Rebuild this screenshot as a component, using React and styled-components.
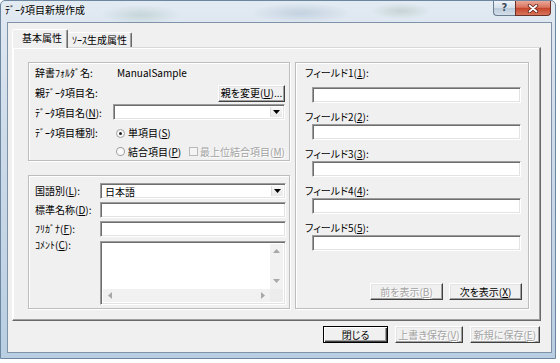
import React from "react";
import styled, { createGlobalStyle, css } from "styled-components";

const Global = createGlobalStyle`
  html, body { margin: 0; padding: 0; background: #fff; }
  body {
    width: 560px; height: 363px; overflow: hidden;
    font-family: "Noto Sans CJK JP", "Noto Sans", sans-serif;
    font-size: 10px; color: #000;
    font-feature-settings: "palt";
  }
  * { box-sizing: border-box; }
`;

const Win = styled.div`
  width: 556px;
  height: 359px;
  border: 1px solid #6d87a1;
  border-radius: 5px 5px 0 0;
  background: linear-gradient(180deg, #e2eaf2 0%, #cfdcea 35%, #b9cee2 100%);
  display: flex;
  flex-direction: column;
  padding: 0 3px 5px 6px;
`;

const TitleBar = styled.div`
  height: 21px;
  margin: 0 -3px 0 -6px;
  padding: 0 4px 0 4px;
  display: flex;
  align-items: flex-start;
  justify-content: space-between;
  background:
    radial-gradient(ellipse 40px 10px at 140px 14px, rgba(120,160,150,0.25), transparent),
    radial-gradient(ellipse 50px 10px at 300px 12px, rgba(110,140,170,0.25), transparent),
    radial-gradient(ellipse 30px 8px at 400px 10px, rgba(120,150,130,0.25), transparent);
`;

const Title = styled.div`
  margin-top: 3px;
  line-height: 12px;
  font-size: 10px;
  text-shadow: 0 0 5px rgba(255,255,255,0.9);
`;

const CaptionBtns = styled.div`
  display: flex;
  height: 15px;
`;

const HelpBtn = styled.div`
  width: 22px;
  height: 15px;
  border: 1px solid #6a7c8f;
  border-top: none;
  border-right: none;
  border-radius: 0 0 0 4px;
  background: linear-gradient(180deg, #eef3f8 0%, #d6e0ea 48%, #bccbda 52%, #d3dee9 100%);
  color: #3c4b5a;
  font-family: "DejaVu Sans", sans-serif;
  font-size: 10px;
  font-weight: bold;
  line-height: 14px;
  text-align: center;
`;

const CloseBtn = styled.div`
  width: 36px;
  height: 15px;
  border: 1px solid #6b3129;
  border-top: none;
  border-radius: 0 0 4px 0;
  background: linear-gradient(180deg, #eaa797 0%, #d9755f 45%, #c5452c 52%, #d8765c 100%);
  display: flex;
  align-items: center;
  justify-content: center;
`;

const Client = styled.div`
  flex: 1;
  border: 1px solid #7f93a8;
  background: #f0f0f0;
  padding: 6px 10px 9px 4px;
  display: flex;
  flex-direction: column;
`;

const TabStrip = styled.div`
  height: 18px;
  display: flex;
  align-items: flex-end;
  position: relative;
  z-index: 1;
`;

const Tab = styled.div`
  height: ${p => (p.$active ? 19 : 15)}px;
  margin-bottom: ${p => (p.$active ? -1 : 0)}px;
  padding: ${p => (p.$active ? "0 5px 0 9px" : "0 4px 0 4px")};
  display: flex;
  align-items: center;
  background: #f0f0f0;
  border: 1px solid;
  border-bottom: none;
  border-color: #fff #696969 transparent #fff;
  border-radius: 2px 2px 0 0;
  box-shadow: inset -1px 0 0 #a0a0a0;
  line-height: 12px;
  ${p => p.$active && css`padding-bottom: 2px;`}
  ${p => !p.$active && css`border-left: none;`}
`;

const Panel = styled.div`
  height: 274px;
  border: 1px solid;
  border-color: #d8d8d8 #696969 #696969 #fff;
  box-shadow: inset -1px -1px 0 #a0a0a0, inset 1px 1px 0 #fff;
  padding: 14px 11px 11px 15px;
  display: flex;
  gap: 5px;
`;

const LeftCol = styled.div`
  width: 262px;
  display: flex;
  flex-direction: column;
  gap: 14px;
`;

const Group = styled.div`
  border: 1px solid #bdbdbd;
  box-shadow: inset 1px 1px 0 #fff, 1px 1px 0 #fff;
`;

const TopGroup = styled(Group)`
  height: 99px;
  display: grid;
  grid-template-columns: 78px 172px;
  grid-template-rows: 20px 20px 20px 20px 17px;
  padding: 0 4px 0 6px;
`;

const BottomGroup = styled(Group)`
  height: 134px;
  display: grid;
  grid-template-columns: 65px 186px;
  grid-template-rows: 16px 16px 16px 1fr;
  row-gap: 3px;
  padding: 7px 3px 3px 6px;
`;

const RightGroup = styled(Group)`
  width: 234px;
  display: flex;
  flex-direction: column;
  padding: 4px 7px 8px 9px;
`;

const Label = styled.div`
  align-self: ${p => (p.$top ? "start" : "center")};
  grid-column: ${p => p.$col || "auto"};
  line-height: 12px;
  white-space: nowrap;
  margin-top: ${p => (p.$top ? -1 : 0)}px;
`;

const Value = styled.div`
  align-self: center;
  padding-left: 4px;
  line-height: 12px;
`;

const sunken = css`
  border: 1px solid;
  border-color: #9c9c9c #fff #fff #9c9c9c;
  box-shadow: inset 1px 1px 0 #6e6e6e, inset -1px -1px 0 #e3e3e3;
  background: #fff;
`;

const TextBox = styled.div`
  ${sunken}
  height: 16px;
  width: ${p => (p.$w ? `${p.$w}px` : "auto")};
  margin-left: ${p => p.$ml || 0}px;
`;

const Combo = styled.div`
  ${sunken}
  height: 16px;
  align-self: ${p => (p.$center ? "center" : "start")};
  margin-top: ${p => p.$mt || 0}px;
  display: flex;
  align-items: stretch;
  padding: 2px;
`;

const ComboText = styled.div`
  flex: 1;
  line-height: 11px;
  padding-left: 2px;
`;

const DropBtn = styled.div`
  width: 12px;
  background: linear-gradient(180deg, #f7f7f7, #e8e8e8);
  border-left: 1px solid #dcdcdc;
  display: flex;
  align-items: center;
  justify-content: center;
`;

const Btn = styled.div`
  width: ${p => p.$w}px;
  height: 17px;
  background: #f0f0f0;
  border: 1px solid;
  border-color: #fff #404040 #404040 #fff;
  box-shadow: inset -1px -1px 0 #a0a0a0, inset 1px 1px 0 #e3e3e3;
  color: ${p => (p.$off ? "#a3a3a3" : "#000")};
  text-shadow: ${p => (p.$off ? "1px 1px 0 #fff" : "none")};
  display: flex;
  align-items: center;
  justify-content: center;
  line-height: 12px;
  white-space: nowrap;
  overflow: hidden;
  align-self: ${p => (p.$end ? "center" : "auto")};
  justify-self: ${p => (p.$end ? "end" : "auto")};
  ${p => p.$default && css`
    border-color: #000;
    box-shadow: inset 1px 1px 0 #fff, inset -1px -1px 0 #404040, inset -2px -2px 0 #a0a0a0;
  `}
`;

const OptRow = styled.div`
  grid-column: ${p => p.$col || "auto"};
  align-self: center;
  display: flex;
  align-items: center;
  padding-left: 3px;
  line-height: 12px;
  white-space: nowrap;
`;

const Radio = styled.span`
  width: 9px;
  height: 9px;
  border-radius: 50%;
  border: 1px solid #a2a2a2;
  background: radial-gradient(circle, #fff 0%, #f0f0f0 100%);
  margin-right: 3px;
  display: flex;
  align-items: center;
  justify-content: center;
  &::after {
    content: "";
    width: 3px;
    height: 3px;
    border-radius: 50%;
    background: ${p => (p.$on ? "#222" : "transparent")};
  }
`;

const Check = styled.span`
  width: 9px;
  height: 9px;
  border: 1px solid #b9b9b9;
  background: #f4f4f4;
  margin: 0 2px 0 8px;
`;

const Dim = styled.span`
  color: #a3a3a3;
  text-shadow: 1px 1px 0 #fff;
`;

const Memo = styled.div`
  ${sunken}
  display: grid;
  grid-template-columns: 1fr 13px;
  grid-template-rows: 1fr 13px;
  padding: 2px;
  margin-top: 1px;
`;

const MemoBody = styled.div`
  background: #fff;
`;

const VScroll = styled.div`
  background: #f1f1f1;
  display: flex;
  flex-direction: column;
  justify-content: space-between;
  align-items: center;
  padding: 5px 0 6px;
`;

const HScroll = styled.div`
  background: #f1f1f1;
  display: flex;
  justify-content: space-between;
  align-items: center;
  padding: 0 5px 0 5px;
`;

const Corner = styled.div`
  background: #ececec;
`;

const FieldLabel = styled.div`
  line-height: 12px;
  margin-bottom: ${p => (p.$first ? 8 : 1)}px;
  margin-top: ${p => (p.$first ? 0 : 8)}px;
  white-space: nowrap;
`;

const GroupBtns = styled.div`
  margin-top: auto;
  display: flex;
  justify-content: flex-end;
  gap: 6px;
  margin-right: -1px;
`;

const BottomBar = styled.div`
  margin-top: 5px;
  display: flex;
  justify-content: flex-end;
  gap: 7px;
  padding-right: 1px;
`;

const Arrow = ({ dir }) => {
  const pts = {
    up: "0,4 3.5,0 7,4",
    down: "0,0 7,0 3.5,4",
    left: "4,0 4,7 0,3.5",
    right: "0,0 0,7 4,3.5",
  }[dir];
  const horiz = dir === "left" || dir === "right";
  return (
    <svg width={horiz ? 4 : 7} height={horiz ? 7 : 4} viewBox={horiz ? "0 0 4 7" : "0 0 7 4"}>
      <polygon points={pts} fill="#a8a8a8" />
    </svg>
  );
};

const DropArrow = () => (
  <svg width="7" height="4" viewBox="0 0 7 4">
    <polygon points="0,0 7,0 3.5,4" fill="#000" />
  </svg>
);

const CloseGlyph = () => (
  <svg width="12" height="9" viewBox="0 0 12 9">
    <path d="M2.5 1.5 L9.5 7.5 M9.5 1.5 L2.5 7.5" stroke="#5e1f15" strokeWidth="3.4" strokeLinecap="round" />
    <path d="M2.5 1.5 L9.5 7.5 M9.5 1.5 L2.5 7.5" stroke="#fff" strokeWidth="1.8" strokeLinecap="round" />
  </svg>
);

const fields = [1, 2, 3, 4, 5];

export default function App() {
  return (
    <>
      <Global />
      <Win>
        <TitleBar>
          <Title>ﾃﾞｰﾀ項目新規作成</Title>
          <CaptionBtns>
            <HelpBtn>?</HelpBtn>
            <CloseBtn>
              <CloseGlyph />
            </CloseBtn>
          </CaptionBtns>
        </TitleBar>
        <Client>
          <TabStrip>
            <Tab $active>基本属性</Tab>
            <Tab>ｿｰｽ生成属性</Tab>
          </TabStrip>
          <Panel>
            <LeftCol>
              <TopGroup>
                <Label>辞書ﾌｫﾙﾀﾞ名:</Label>
                <Value>ManualSample</Value>
                <Label>親ﾃﾞｰﾀ項目名:</Label>
                <Btn $w={67} $end>
                  親を変更(<u>U</u>)...
                </Btn>
                <Label>
                  ﾃﾞｰﾀ項目名(<u>N</u>):
                </Label>
                <Combo $mt={1}>
                  <ComboText />
                  <DropBtn>
                    <DropArrow />
                  </DropBtn>
                </Combo>
                <Label>ﾃﾞｰﾀ項目種別:</Label>
                <OptRow>
                  <Radio $on />
                  単項目(<u>S</u>)
                </OptRow>
                <OptRow $col="2">
                  <Radio />
                  結合項目(<u>P</u>)
                  <Check />
                  <Dim>
                    最上位結合項目(<u>M</u>)
                  </Dim>
                </OptRow>
              </TopGroup>
              <BottomGroup>
                <Label>
                  国語別(<u>L</u>):
                </Label>
                <Combo>
                  <ComboText>日本語</ComboText>
                  <DropBtn>
                    <DropArrow />
                  </DropBtn>
                </Combo>
                <Label>
                  標準名称(<u>D</u>):
                </Label>
                <TextBox />
                <Label>
                  ﾌﾘｶﾞﾅ(<u>F</u>):
                </Label>
                <TextBox />
                <Label $top>
                  ｺﾒﾝﾄ(<u>C</u>):
                </Label>
                <Memo>
                  <MemoBody />
                  <VScroll>
                    <Arrow dir="up" />
                    <Arrow dir="down" />
                  </VScroll>
                  <HScroll>
                    <Arrow dir="left" />
                    <Arrow dir="right" />
                  </HScroll>
                  <Corner />
                </Memo>
              </BottomGroup>
            </LeftCol>
            <RightGroup>
              {fields.map(n => (
                <React.Fragment key={n}>
                  <FieldLabel $first={n === 1}>
                    フィールド{n}(<u>{n}</u>):
                  </FieldLabel>
                  <TextBox $w={209} $ml={7} />
                </React.Fragment>
              ))}
              <GroupBtns>
                <Btn $w={73} $off>
                  前を表示(<u>B</u>)
                </Btn>
                <Btn $w={73}>
                  次を表示(<u>X</u>)
                </Btn>
              </GroupBtns>
            </RightGroup>
          </Panel>
          <BottomBar>
            <Btn $w={65} $default>
              閉じる
            </Btn>
            <Btn $w={68} $off>
              上書き保存(<u>V</u>)
            </Btn>
            <Btn $w={70} $off>
              新規に保存(<u>E</u>)
            </Btn>
          </BottomBar>
        </Client>
      </Win>
    </>
  );
}
